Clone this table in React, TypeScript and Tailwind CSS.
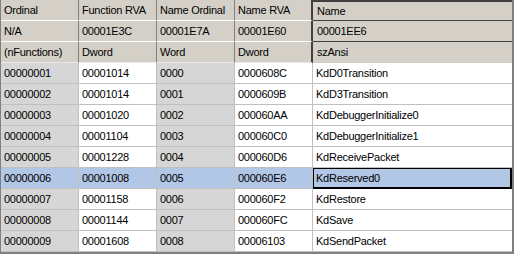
import React from "react";

const headers: string[][] = [
  ["Ordinal", "Function RVA", "Name Ordinal", "Name RVA", "Name"],
  ["N/A", "00001E3C", "00001E7A", "00001E60", "00001EE6"],
  ["(nFunctions)", "Dword", "Word", "Dword", "szAnsi"],
];

const rows: string[][] = [
  ["00000001", "00001014", "0000", "0000608C", "KdD0Transition"],
  ["00000002", "00001014", "0001", "0000609B", "KdD3Transition"],
  ["00000003", "00001020", "0002", "000060AA", "KdDebuggerInitialize0"],
  ["00000004", "00001104", "0003", "000060C0", "KdDebuggerInitialize1"],
  ["00000005", "00001228", "0004", "000060D6", "KdReceivePacket"],
  ["00000006", "00001008", "0005", "000060E6", "KdReserved0"],
  ["00000007", "00001158", "0006", "000060F2", "KdRestore"],
  ["00000008", "00001144", "0007", "000060FC", "KdSave"],
  ["00000009", "00001608", "0008", "00006103", "KdSendPacket"],
];

const SELECTED = 5;

export default function App() {
  return (
    <div
      className="w-[514px] h-[254px] bg-white border-l border-r-2 border-b-2 border-[#808080] overflow-hidden text-black text-[11px] tracking-[-0.25px] leading-none"
      style={{ fontFamily: '"Liberation Sans", Arial, sans-serif' }}
    >
      <div className="grid grid-cols-[78px_78px_78px_78px_1fr]">
        {headers.map((row, ri) =>
          row.map((text, ci) => {
            const isName = ci === 4;
            const isCol4 = ci === 3;
            let cls =
              "h-[21px] flex items-center pl-[3px] pt-px bg-[#d4d0c8] whitespace-nowrap overflow-hidden ";
            if (isName) {
              cls += "pl-[4px] ";
              if (ri === 0) cls += "border-t-2 border-t-[#404040] ";
              cls +=
                ri < 2
                  ? "border-b border-b-[#404040] "
                  : "border-b border-b-[#d4d0c8] ";
            } else {
              cls += ri < 2 ? "border-b border-b-white " : "border-b border-b-[#e8e8e8] ";
              cls += isCol4
                ? "border-r-2 border-r-[#404040] "
                : "border-r border-r-[#808080] ";
            }
            return (
              <div key={`h${ri}-${ci}`} className={cls}>
                {text}
              </div>
            );
          })
        )}
        {rows.map((row, ri) =>
          row.map((text, ci) => {
            const sel = ri === SELECTED;
            const isName = ci === 4;
            let cls =
              "h-[21px] flex items-center pl-[3px] pt-px whitespace-nowrap overflow-hidden border-b border-b-[#c0c0c0] ";
            if (!isName) cls += "border-r border-r-[#c0c0c0] ";
            if (sel) {
              cls += "bg-[#b2c6e6] ";
              if (isName)
                cls +=
                  "shadow-[inset_0_0_0_1px_#000] border-r border-r-black border-b-black ";
            } else if (ci === 0 || ci === 2) {
              cls += "bg-[#d6d6d6] ";
            } else {
              cls += "bg-white ";
            }
            return (
              <div key={`r${ri}-${ci}`} className={cls}>
                {text}
              </div>
            );
          })
        )}
      </div>
    </div>
  );
}
